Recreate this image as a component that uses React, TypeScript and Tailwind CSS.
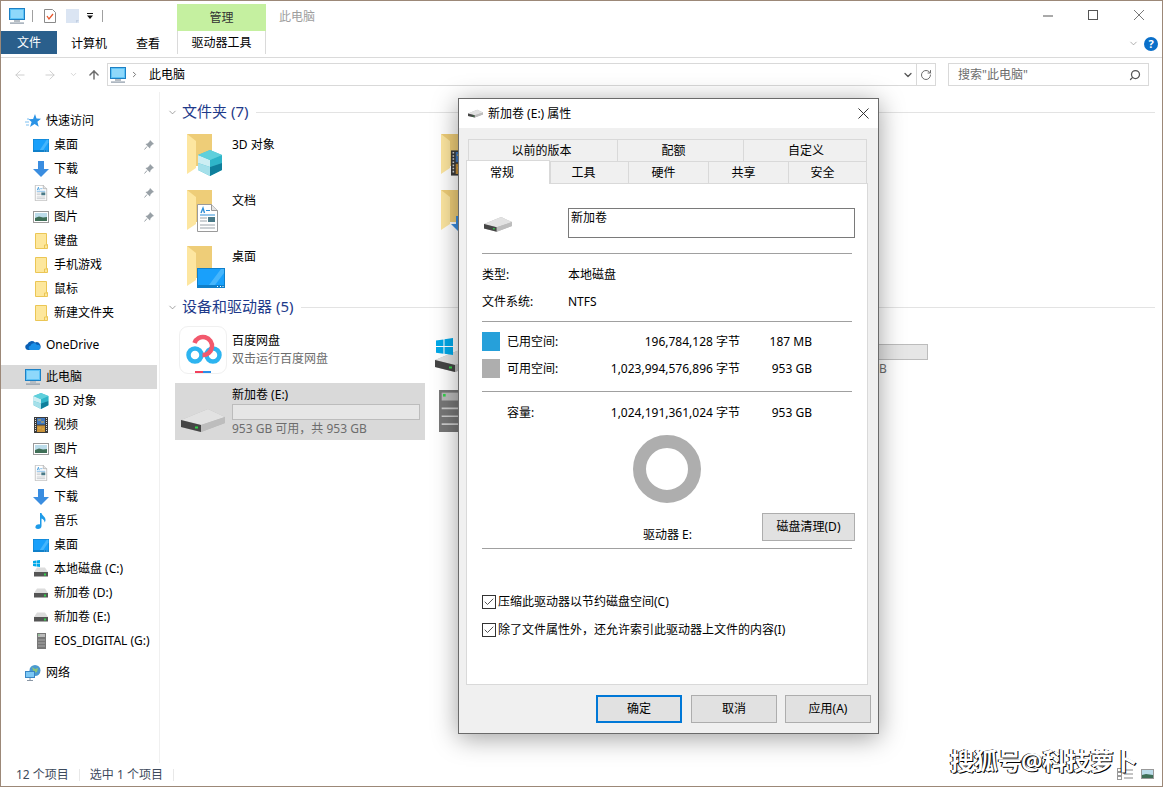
import type { ReactNode } from "react";
import { ArrowLeft, ArrowRight, ArrowUp, Check, ChevronDown, ChevronRight, RotateCw, Search } from "lucide-react";

const Monitor = ({ className = "w-4 h-4" }: { className?: string }) => (
  <svg viewBox="0 0 16 16" className={className}>
    <rect x="0.5" y="0.5" width="15" height="11" fill="#5cc3f7" stroke="#1d80c4" />
    <rect x="2" y="2" width="12" height="8" fill="#8ed8fb" />
    <rect x="5" y="12" width="6" height="2" fill="#b6bdc4" />
    <rect x="1" y="14.5" width="14" height="1.2" fill="#8a97a5" />
  </svg>
);

const Star = () => (
  <svg viewBox="0 0 16 16" className="w-4 h-4">
    <path d="M10 1l1.5 4.6 4.5.2-3.6 3 1.3 4.9L9.6 11 5 14l1.6-5L3.5 6.200l4.600-.2z" fill="#2a93e6" />
    <path d="M0 9h4M1 12h3M2 6h2" stroke="#7cc0f2" strokeWidth="1" />
  </svg>
);

const DesktopIcon = ({ className = "w-4 h-[13px]" }: { className?: string }) => (
  <svg viewBox="0 0 28 20" preserveAspectRatio="none" className={className}>
    <rect width="28" height="20" fill="#0f7fc9" />
    <rect x="1" y="1" width="26" height="16" fill="#19a0fb" />
    <path d="M12 17L24 1h3v4L18 17z" fill="#46b6fc" />
    <path d="M20 18.500h1M23 18.500h1M25.500 18.500h1" stroke="#fff" />
  </svg>
);

const DownArrow = () => (
  <svg viewBox="0 0 16 16" className="w-4 h-4">
    <path d="M5 0h6v8h5l-8 8-8-8h5z" fill="#3a8de0" />
  </svg>
);

const DocIcon = ({ className = "w-4 h-4" }: { className?: string }) => (
  <svg viewBox="0 0 21 28" className={className}>
    <path d="M.5.5h14l6 6v21H.5z" fill="#fff" stroke="#9a9a9a" />
    <path d="M14.500.5v6h6" fill="#e6e6e6" stroke="#9a9a9a" />
    <path d="M4 9l2-5 1.500 5" stroke="#2f8fd8" strokeWidth="1.400" fill="none" />
    <path d="M9 6.500h4" stroke="#2f8fd8" />
    <path d="M3 11h15" stroke="#2f8fd8" />
    <path d="M3 14h7M3 17h7M3 21h15M3 24h15" stroke="#9aa3aa" />
    <rect x="11" y="13" width="7" height="5" fill="#4a7a88" />
  </svg>
);

const PictureIcon = () => (
  <svg viewBox="0 0 16 12" className="w-4 h-3">
    <rect x="0.5" y="0.5" width="15" height="11" fill="#fff" stroke="#9a9a9a" />
    <rect x="2" y="2" width="12" height="8" fill="#bcdcea" />
    <path d="M2 7l4-1.500 4 1 4-.5v4H2z" fill="#3f6f57" />
  </svg>
);

const MiniFolder = () => (
  <svg viewBox="0 0 13 16" className="w-[13px] h-4">
    <path d="M.5.5h11v11h1v4H.5z" fill="#fde79c" stroke="#ebc655" />
    <path d="M9.500 15V12h3" fill="none" stroke="#ebc655" />
  </svg>
);

const Cloud = () => (
  <svg viewBox="0 0 16 10" className="w-4 h-[10px]">
    <path d="M3 10a3 3 0 0 1-.5-5.900A4.500 4.500 0 0 1 10 2.500 3.500 3.500 0 0 1 13 10z" fill="#0a5fb4" />
    <path d="M5 10a2.200 2.200 0 0 1 .5-4.200 3.500 3.500 0 0 1 6.500-.8A2.600 2.600 0 0 1 13.500 10z" fill="#1a90e8" />
  </svg>
);

const Cube = ({ className = "w-4 h-4" }: { className?: string }) => (
  <svg viewBox="0 0 26 26" className={className}>
    <path d="M13 0l12 5v15l-12 6L1 20V5z" fill="#4cc2d0" />
    <path d="M1 5l12 5v7L1 13z" fill="#cdeef3" />
    <path d="M13 10l12-5v8l-12 4z" fill="#2fb5c9" />
    <path d="M1 13l12 4v9L1 20z" fill="#a5e0ea" />
    <path d="M13 17l12-4v7l-12 6z" fill="#0f7f9c" />
    <path d="M13 0l12 5-12 5L1 5z" fill="#5fd0dc" />
  </svg>
);

const Film = ({ className = "w-[14px] h-4" }: { className?: string }) => (
  <svg viewBox="0 0 14 16" className={className}>
    <rect width="14" height="16" fill="#3a3a3a" />
    <rect x="3" y="1" width="8" height="6.500" fill="#3f78c0" />
    <rect x="3" y="8.500" width="8" height="6.500" fill="#c8923a" />
    <path d="M4 3h3M7 5h3M4 11h3M8 12h2" stroke="#e0b040" />
    <path d="M1.500 1v14M12.500 1v14" stroke="#ddd" strokeDasharray="1 1" />
  </svg>
);

const Music = () => (
  <svg viewBox="0 0 12 16" className="w-3 h-4">
    <path d="M5 0h1.500c.5 3 4 3.500 4 7 0 1-.5 2-1 2.500.3-2-1.500-3.500-3-4V13c0 1.700-1.500 3-3.500 3S0 15 .5 13.500 3 11 5 11.500z" fill="#1e9be8" />
  </svg>
);

// top face takes most of the height, the dark front is only a band
const Drive = ({ className = "w-4 h-[10px]" }: { className?: string }) => (
  <svg viewBox="0 0 44 24" className={className}>
    <path d="M0 12L27 1l17 8v6L20 24 0 19z" fill="#b8b8b8" />
    <path d="M0 12L27 1l17 8-24 8z" fill="#e2e2e2" />
    <path d="M0 12l20 5v7L0 19z" fill="#454545" />
    <path d="M20 17l24-8v6L20 24z" fill="#bdbdbd" />
    <rect x="14" y="18.500" width="3" height="2" fill="#33d04a" />
  </svg>
);

const SmallDrive = () => (
  <svg viewBox="0 0 16 10" className="w-4 h-[10px]">
    <path d="M1 5L4 .5h8L15 5z" fill="#dcdcdc" />
    <rect x="1" y="5" width="14" height="4.500" fill="#555" />
    <rect x="11" y="6.500" width="2" height="2" fill="#33d04a" />
  </svg>
);

const WinLogo = ({ className = "w-[7px] h-[7px]" }: { className?: string }) => (
  <svg viewBox="0 0 16 16" className={className}>
    <path d="M0 2.300l7-1v6.300H0zM8 1.100L16 0v7.600H8zM0 8.500h7v6.300l-7-1zM8 8.500h8V16l-8-1.100z" fill="#00a8e8" />
  </svg>
);

const Tower = ({ className = "w-[9px] h-4" }: { className?: string }) => (
  <svg viewBox="0 0 9 16" preserveAspectRatio="none" className={className}>
    <rect width="9" height="16" fill="#777" />
    <rect x="1" y="1" width="7" height="3" fill="#bbb" />
    <path d="M1 7h7M1 10h7M1 13h7" stroke="#ccc" strokeWidth="0.600" />
    <rect x="1.500" y="1.500" width="1" height="1" fill="#33d04a" />
  </svg>
);

const NetworkIcon = () => (
  <svg viewBox="0 0 16 16" className="w-4 h-4">
    <circle cx="10" cy="5.500" r="5.500" fill="#4a9ad0" />
    <path d="M7 2l3 2 3-1-1 4-3 1z" fill="#8cc47a" />
    <rect x="0.500" y="6.500" width="9" height="6" fill="#7cc8f5" stroke="#3a86c4" />
    <path d="M5 13v2M2 15.500h6" stroke="#8a97a5" />
  </svg>
);

const Pin = () => (
  <svg viewBox="0 0 10 10" className="w-[10px] h-[10px]">
    <path d="M6 0l4 4-1.500.5L6.500 6.500 6 8.500 1.500 4 3.500 3.500 5.500 1.500z" fill="#98a0a6" />
    <path d="M3 6.500L.5 9.500" stroke="#98a0a6" />
  </svg>
);

const BigFolder = () => (
  <svg viewBox="0 0 25 40" className="w-[25px] h-10">
    <rect width="25" height="32" fill="#eecd78" />
    <path d="M0 0l9 7v27l-9 6z" fill="#fde6a0" />
  </svg>
);

const Baidu = () => (
  <div className="w-12 h-12 rounded-[9px] border border-[#f0f0f0] bg-white relative overflow-hidden">
    <svg viewBox="0 0 48 48" className="w-12 h-12 -m-px">
      <circle cx="16" cy="29" r="6.500" fill="none" stroke="#2db4f0" strokeWidth="4.500" />
      <circle cx="34" cy="29" r="6.500" fill="none" stroke="#2db4f0" strokeWidth="4.500" />
      <path d="M15.500 17A9 9 0 1 1 23.500 29" fill="none" stroke="#f2596d" strokeWidth="4.500" />
      <rect x="16" y="45" width="8" height="3" fill="#f2405c" />
      <rect x="24" y="45" width="8" height="3" fill="#2a8ee8" />
    </svg>
  </div>
);

const quickItems: [ReactNode, string, boolean][] = [
  [<DesktopIcon />, "桌面", true],
  [<DownArrow />, "下载", true],
  [<DocIcon />, "文档", true],
  [<PictureIcon />, "图片", true],
  [<MiniFolder />, "键盘", false],
  [<MiniFolder />, "手机游戏", false],
  [<MiniFolder />, "鼠标", false],
  [<MiniFolder />, "新建文件夹", false],
];

const pcItems: [ReactNode, string][] = [
  [<Cube />, "3D 对象"],
  [<Film />, "视频"],
  [<PictureIcon />, "图片"],
  [<DocIcon />, "文档"],
  [<DownArrow />, "下载"],
  [<Music />, "音乐"],
  [<DesktopIcon />, "桌面"],
  [
    <span className="relative flex w-4 h-4 items-end">
      <SmallDrive />
      <span className="absolute -top-px left-0">
        <WinLogo />
      </span>
    </span>,
    "本地磁盘 (C:)",
  ],
  [<SmallDrive />, "新加卷 (D:)"],
  [<SmallDrive />, "新加卷 (E:)"],
  [<Tower />, "EOS_DIGITAL (G:)"],
];

const folders: [string, ReactNode][] = [
  ["3D 对象", <Cube className="w-[26px] h-[26px]" />],
  ["视频", <Film className="w-[22px] h-[26px]" />],
  ["图片", <PictureIcon />],
  ["文档", <DocIcon className="w-[21px] h-7" />],
  ["下载", <DownArrow />],
  ["音乐", <Music />],
  ["桌面", <DesktopIcon className="w-[28px] h-5" />],
];

function SideRow({ icon, label, pin, top, active }: { icon: ReactNode; label: string; pin?: boolean; top?: boolean; active?: boolean }) {
  return (
    <div className={`h-6 flex items-center mr-[2px] ${top ? "pl-6" : "pl-8"} ${active ? "bg-[#d9d9d9]" : ""}`}>
      <span className="w-4 flex justify-center shrink-0">{icon}</span>
      <span className="ml-[5px] whitespace-nowrap text-black">{label}</span>
      {pin && (
        <span className="ml-auto mr-[3px] flex">
          <Pin />
        </span>
      )}
    </div>
  );
}

function SectionHeader({ title }: { title: string }) {
  return (
    <div className="h-5 flex items-center">
      <ChevronDown className="w-[11px] h-[11px] ml-[7px] mr-[4px] text-[#7a7a7a] shrink-0" strokeWidth={1.500} />
      <span className="text-[15px] text-[#1e3a8a] whitespace-nowrap pb-[2px]">{title}</span>
      <span className="flex-1 h-px bg-[#e3e3e3] ml-2" />
    </div>
  );
}

function FolderTile({ name, overlay }: { name: string; overlay: ReactNode }) {
  return (
    <div className="h-14 flex">
      <div className="relative w-[57px] pl-3 pt-2 shrink-0">
        <BigFolder />
        <span className="absolute left-[22px] bottom-[6px]">{overlay}</span>
      </div>
      <span className="pt-[11px] text-black whitespace-nowrap">{name}</span>
    </div>
  );
}

function DriveTile({ icon, name, free, selected }: { icon: ReactNode; name?: string; free?: ReactNode; selected?: boolean }) {
  return (
    <div className={`h-[57px] flex ${selected ? "bg-[#d9d9d9]" : ""}`}>
      <div className="w-[57px] shrink-0 flex items-end pb-2 pl-[6px]">{icon}</div>
      <div className="flex-1 pt-[3px] pr-[5px] min-w-0">
        <div className="h-[17px] whitespace-nowrap text-black leading-[17px]">{name}</div>
        <div className="h-4 border border-[#bcbcbc] bg-[#e6e6e6] mt-px" />
        <div className="text-[#6d6d6d] whitespace-nowrap leading-[18px]">{free}</div>
      </div>
    </div>
  );
}

function Divider() {
  return <div className="h-px w-[370px] bg-[#a0a0a0]" />;
}

function UsageRow({ swatch, label, bytes, size }: { swatch?: string; label: string; bytes: string; size: string }) {
  return (
    <div className="flex items-center w-[330px] h-[19px]">
      <span className="w-[25px] shrink-0">{swatch && <span className={`block w-[18px] h-[19px] ${swatch}`} />}</span>
      <span className="flex-1 flex justify-between">
        <span>{label}</span>
        <span>{bytes} 字节</span>
      </span>
      <span className="w-[72px] text-right">{size}</span>
    </div>
  );
}

function CheckRow({ label }: { label: string }) {
  return (
    <div className="flex items-center h-5">
      <span className="w-[14px] h-[14px] border border-[#333] flex items-center justify-center shrink-0">
        <Check className="w-3 h-3 text-[#555]" strokeWidth={2} />
      </span>
      <span className="ml-[2px] whitespace-nowrap">{label}</span>
    </div>
  );
}

function DlgButton({ label, primary }: { label: string; primary?: boolean }) {
  return (
    <button className={`w-[86px] h-7 bg-[#e1e1e1] ${primary ? "border-2 border-[#0078d7]" : "border border-[#adadad]"}`}>{label}</button>
  );
}

function Tab({ label, className }: { label: string; className: string }) {
  return <div className={`h-[22px] flex items-center justify-center bg-[#f0f0f0] border-[#d9d9d9] border-t border-l ${className}`}>{label}</div>;
}

function PropertiesDialog() {
  return (
    <div className="absolute left-[457px] top-[97px] w-[421px] h-[636px] border border-[#6a6a6a] bg-[#f0f0f0] shadow-[0_4px_24px_rgba(0,0,0,0.38)] flex flex-col text-black">
      <div className="h-[29px] bg-white flex items-center shrink-0">
        <span className="ml-[9px] flex">
          <Drive className="w-[15px] h-[9px]" />
        </span>
        <span className="ml-[5px]">新加卷 (E:) 属性</span>
        <svg viewBox="0 0 12 12" className="w-[11px] h-[11px] ml-auto mr-[9px]">
          <path d="M.5.5l11 11M11.500.5l-11 11" stroke="#222" strokeWidth="1" />
        </svg>
      </div>
      <div className="pl-[9px] pt-[11px] flex">
        <Tab label="以前的版本" className="w-[149px] pr-[3px]" />
        <Tab label="配额" className="w-[126px] pr-[14px]" />
        <Tab label="自定义" className="w-[124px] border-r pl-[2px]" />
      </div>
      <div className="pl-[7px] flex relative z-10">
        <div className="w-[84px] h-6 -mt-px mb-[-1px] bg-white border border-b-0 border-[#d9d9d9] flex items-center justify-center pr-[12px]">常规</div>
        <Tab label="工具" className="w-[78px] pr-[12px]" />
        <Tab label="硬件" className="w-[80px] pr-[10px]" />
        <Tab label="共享" className="w-[80px] pr-[10px]" />
        <Tab label="安全" className="w-[79px] border-r pr-[10px]" />
      </div>
      <div className="ml-[7px] w-[402px] h-[502px] bg-white border border-[#d9d9d9] px-[15px] pt-[24px]">
        <div className="flex h-[30px]">
          <span className="w-[86px] flex pl-[2px] pt-2 shrink-0">
            <Drive className="w-[28px] h-4" />
          </span>
          <div className="w-[287px] h-[30px] shrink-0 border border-[#7a7a7a] pl-[2px] pt-[1px]">新加卷</div>
        </div>
        <div className="mt-[15px]">
          <Divider />
        </div>
        <div className="flex items-center h-5 mt-[11px]">
          <span className="w-[86px]">类型:</span>
          <span>本地磁盘</span>
        </div>
        <div className="flex items-center h-5 mt-[7px]">
          <span className="w-[86px]">文件系统:</span>
          <span>NTFS</span>
        </div>
        <div className="mt-[9px]">
          <Divider />
        </div>
        <div className="mt-[10px]">
          <UsageRow swatch="bg-[#26a0da]" label="已用空间:" bytes="196,784,128" size="187 MB" />
        </div>
        <div className="mt-2">
          <UsageRow swatch="bg-[#aeaeae]" label="可用空间:" bytes="1,023,994,576,896" size="953 GB" />
        </div>
        <div className="mt-[13px]">
          <Divider />
        </div>
        <div className="mt-[11px]">
          <UsageRow label="容量:" bytes="1,024,191,361,024" size="953 GB" />
        </div>
        <div className="mt-[13px] ml-[151px] w-[68px] h-[68px] rounded-full border-[13px] border-[#aeaeae]" />
        <div className="mt-[10px] flex h-7 relative">
          <span className="ml-[161px] mt-[14px] whitespace-nowrap">驱动器 E:</span>
          <button className="absolute left-[280px] top-0 w-[93px] h-7 bg-[#e1e1e1] border border-[#adadad]">磁盘清理(D)</button>
        </div>
        <div className="mt-[7px]">
          <Divider />
        </div>
        <div className="mt-[43px]">
          <CheckRow label="压缩此驱动器以节约磁盘空间(C)" />
        </div>
        <div className="mt-2">
          <CheckRow label="除了文件属性外，还允许索引此驱动器上文件的内容(I)" />
        </div>
      </div>
      <div className="flex mt-[10px] pl-[137px]">
        <DlgButton label="确定" primary />
        <span className="w-[9px]" />
        <DlgButton label="取消" />
        <span className="w-2" />
        <DlgButton label="应用(A)" />
      </div>
    </div>
  );
}

export default function App() {
  return (
    <div className="relative w-[1163px] h-[787px] overflow-hidden bg-white border border-[#9c8878] flex flex-col text-xs text-black font-['Noto_Sans','Noto_Sans_CJK_SC',sans-serif]">
      {/* title bar */}
      <div className="h-[30px] flex shrink-0 relative">
        <div className="flex items-center pl-2 w-[176px]">
          <Monitor />
          <span className="w-px h-3 bg-[#a0a0a0] ml-[7px]" />
          <svg viewBox="0 0 12 14" className="w-3 h-[14px] ml-[11px]">
            <path d="M.5.5h8l3 3v10H.5z" fill="#fff" stroke="#8a8a8a" />
            <path d="M3 7l2 3 4-5" fill="none" stroke="#e8562a" strokeWidth="1.300" />
          </svg>
          <svg viewBox="0 0 13 14" className="w-[13px] h-[14px] ml-[10px]">
            <rect width="13" height="14" fill="#dbe5f3" />
            <path d="M10 14l3-3h-3z" fill="#c2cfe2" />
          </svg>
          <svg viewBox="0 0 8 8" className="w-2 h-2 ml-[7px]">
            <path d="M1 1h6v1H1zM1 3.500h6L4 7z" fill="#111" />
          </svg>
          <span className="w-px h-3 bg-[#a0a0a0] ml-2" />
        </div>
        <div className="w-[89px] h-[27px] mt-[3px] bg-[#c5f0a0] flex items-center justify-center text-[#333]">管理</div>
        <span className="ml-[13px] mt-[8px] text-[#9e9e9e]">此电脑</span>
        <svg viewBox="0 0 10 10" className="absolute left-[1042px] top-[10px] w-[10px] h-[10px]">
          <path d="M0 5h10" stroke="#555" />
        </svg>
        <svg viewBox="0 0 10 10" className="absolute left-[1087px] top-[9px] w-[10px] h-[10px]">
          <rect x="0.500" y="0.500" width="9" height="9" fill="none" stroke="#555" />
        </svg>
        <svg viewBox="0 0 10 10" className="absolute left-[1133px] top-[9px] w-[10px] h-[10px]">
          <path d="M0 0l10 10M10 0L0 10" stroke="#555" strokeWidth="0.800" />
        </svg>
      </div>

      {/* ribbon tabs */}
      <div className="h-[27px] flex shrink-0 border-b border-[#dadada]">
        <div className="w-[56px] h-[23px] bg-[#2a5f8c] text-white flex items-center justify-center">文件</div>
        <span className="ml-[14px] mt-[5px]">计算机</span>
        <span className="ml-[29px] mt-[5px]">查看</span>
        <div className="ml-[17px] w-[89px] h-[23px] border-x border-[#dadada] flex items-center justify-center">驱动器工具</div>
        <ChevronDown className="w-[11px] h-[11px] ml-auto mr-[5px] mt-[7px] text-[#8a8a8a]" strokeWidth={1.500} />
        <span className="w-[14px] h-[14px] mr-[4px] mt-[6px] rounded-full bg-[#0a6fc9] text-white font-bold text-[11px] leading-[14px] text-center">?</span>
      </div>

      {/* address row */}
      <div className="h-[34px] flex items-center shrink-0 pb-[1px]">
        <ArrowLeft className="w-[14px] h-[14px] ml-[12px] text-[#c8c8c8]" strokeWidth={1.500} />
        <ArrowRight className="w-[14px] h-[14px] ml-[16px] text-[#c8c8c8]" strokeWidth={1.500} />
        <ChevronDown className="w-[9px] h-[9px] ml-[12px] text-[#c8c8c8]" strokeWidth={2} />
        <ArrowUp className="w-[14px] h-[14px] ml-[9px] text-[#6d6d6d]" strokeWidth={2.500} />
        <div className="ml-[6px] w-[829px] h-[23px] border border-[#d9d9d9] flex items-center">
          <span className="ml-[2px] flex">
            <Monitor />
          </span>
          <ChevronRight className="w-[9px] h-[9px] ml-[4px] text-[#6d6d6d]" strokeWidth={2.500} />
          <span className="ml-[10px]">此电脑</span>
          <ChevronDown className="w-3 h-3 ml-auto mr-[1px] text-[#555]" strokeWidth={2.500} />
          <span className="w-px h-full bg-[#d9d9d9] ml-[1px]" />
          <RotateCw className="w-3 h-3 mx-[3px] text-[#6d6d6d]" strokeWidth={2} />
        </div>
        <div className="ml-[12px] w-[201px] h-[23px] border border-[#d9d9d9] flex items-center pl-[9px] text-[#6d6d6d]">
          <span>搜索"此电脑"</span>
          <Search className="w-3 h-3 ml-auto mr-[7px] text-[#555] -scale-x-100" strokeWidth={2.500} />
        </div>
      </div>

      {/* main */}
      <div className="flex-1 flex min-h-0">
        <div className="w-[158px] shrink-0 border-r border-[#f0f0f0] pt-[17px] box-content">
          <SideRow top icon={<Star />} label="快速访问" />
          {quickItems.map(([icon, label, pin]) => (
            <SideRow key={label} icon={icon} label={label} pin={pin} />
          ))}
          <div className="h-2" />
          <SideRow top icon={<Cloud />} label="OneDrive" />
          <div className="h-2" />
          <SideRow top active icon={<Monitor />} label="此电脑" />
          {pcItems.map(([icon, label]) => (
            <SideRow key={label} icon={icon} label={label} />
          ))}
          <div className="h-2" />
          <SideRow top icon={<NetworkIcon />} label="网络" />
        </div>
        <div className="flex-1 pt-[10px] pr-[7px] min-w-0">
          <SectionHeader title="文件夹 (7)" />
          <div className="grid grid-cols-[254px_254px_254px] ml-[15px] mt-1">
            {folders.map(([name, overlay]) => (
              <FolderTile key={name} name={name} overlay={overlay} />
            ))}
          </div>
          <div className="mt-[3px]">
            <SectionHeader title="设备和驱动器 (5)" />
          </div>
          <div className="grid grid-cols-[250px_250px_250px] gap-x-1 gap-y-[3px] ml-[15px] mt-[6px]">
            <div className="h-[57px] flex">
              <div className="w-[57px] shrink-0 pl-1 pt-[3px]">
                <Baidu />
              </div>
              <div className="pt-[9px]">
                <div className="text-black leading-[18px]">百度网盘</div>
                <div className="text-[#6d6d6d] leading-[18px]">双击运行百度网盘</div>
              </div>
            </div>
            <DriveTile
              icon={
                <span className="relative">
                  <Drive className="w-[44px] h-[24px]" />
                  <span className="absolute left-px -top-[10px]">
                    <WinLogo className="w-[17px] h-[17px]" />
                  </span>
                </span>
              }
            />
            <DriveTile free={<span className="ml-[139px]">B</span>} icon={<Drive className="w-[44px] h-[24px]" />} />
            <DriveTile selected name="新加卷 (E:)" free="953 GB 可用，共 953 GB" icon={<Drive className="w-[44px] h-[24px]" />} />
            <DriveTile icon={<Tower className="w-[24px] h-[42px] ml-1" />} />
          </div>
        </div>
      </div>

      {/* status bar */}
      <div className="h-[23px] flex items-center shrink-0 text-[#3d4a5c] relative">
        <span className="ml-[15px]">12 个项目</span>
        <span className="w-px h-3 bg-[#e8e8e8] ml-[10px]" />
        <span className="ml-[10px]">选中 1 个项目</span>
        <span className="w-px h-3 bg-[#e8e8e8] ml-[10px]" />
        <svg viewBox="0 0 16 12" className="absolute left-[1116px] top-[5px] w-4 h-3">
          <rect x="0.500" y="0.500" width="4" height="3" fill="none" stroke="#999" />
          <rect x="0.500" y="4.500" width="4" height="3" fill="none" stroke="#999" />
          <rect x="0.500" y="8.500" width="4" height="3" fill="none" stroke="#999" />
          <path d="M7 2h9M7 6h9M7 10h9" stroke="#888" />
        </svg>
        <svg viewBox="0 0 13 10" className="absolute left-[1140px] top-[6px] w-[13px] h-[10px]">
          <rect x="0.500" y="0.500" width="12" height="9" fill="#bcdcea" stroke="#999" />
          <path d="M1 6l4-1 7 1v3H1z" fill="#3f6f57" />
        </svg>
      </div>

      <PropertiesDialog />

      <div className="absolute left-[949px] top-[745px] text-[24px] leading-[30px] font-bold tracking-[-0.3px] text-white whitespace-nowrap [text-shadow:1px_1px_0_#000,-1px_0_0_#000]">
        搜狐号@科技萝卜
      </div>
    </div>
  );
}
